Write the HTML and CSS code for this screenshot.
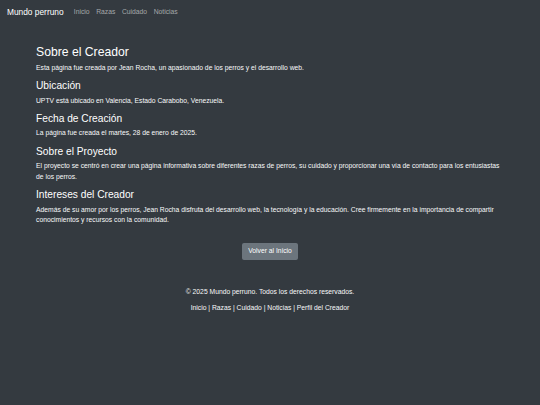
FILE: index.html
```html
<!DOCTYPE html>
<html lang="es">
<head>
<meta charset="utf-8">
<title>Sobre el Creador - Mundo perruno</title>
<link rel="stylesheet" href="styles.css">
</head>
<body>
<nav class="navbar">
  <a class="brand" href="#">Mundo perruno</a>
  <ul class="nav-links">
    <li><a href="#">Inicio</a></li>
    <li><a href="#">Razas</a></li>
    <li><a href="#">Cuidado</a></li>
    <li><a href="#">Noticias</a></li>
  </ul>
</nav>
<main class="container">
  <h2 class="title">Sobre el Creador</h2>
  <p>Esta página fue creada por Jean Rocha, un apasionado de los perros y el desarrollo web.</p>
  <h4>Ubicación</h4>
  <p>UPTV está ubicado en Valencia, Estado Carabobo, Venezuela.</p>
  <h4>Fecha de Creación</h4>
  <p>La página fue creada el martes, 28 de enero de 2025.</p>
  <h4>Sobre el Proyecto</h4>
  <p>El proyecto se centró en crear una página informativa sobre diferentes razas de perros, su cuidado y proporcionar una vía de contacto para los entusiastas de los perros.</p>
  <h4>Intereses del Creador</h4>
  <p>Además de su amor por los perros, Jean Rocha disfruta del desarrollo web, la tecnología y la educación. Cree firmemente en la importancia de compartir conocimientos y recursos con la comunidad.</p>
  <div class="actions">
    <a class="btn" href="#">Volver al Inicio</a>
  </div>
</main>
<footer class="footer">
  <p>© 2025 Mundo perruno. Todos los derechos reservados.</p>
  <p class="footer-links"><a href="#">Inicio</a> | <a href="#">Razas</a> | <a href="#">Cuidado</a> | <a href="#">Noticias</a> | <a href="#">Perfil del Creador</a></p>
</footer>
</body>
</html>
```
FILE: styles.css
```css
* { box-sizing: border-box; }
html, body { margin: 0; padding: 0; }
body {
  background: #343a40;
  color: #f8f9fa;
  font-family: "Liberation Sans", Arial, sans-serif;
  font-size: 6.75px;
  line-height: 10.35px;
  min-height: 405px;
}
a { color: inherit; text-decoration: none; }

.navbar {
  display: flex;
  align-items: center;
  height: 24px;
  padding: 0 7px;
}
.brand {
  font-size: 8.35px;
  color: #fff;
  margin-right: 6.9px;
}
.nav-links {
  display: flex;
  list-style: none;
  margin: 0;
  padding: 0;
}
.nav-links a {
  display: block;
  padding: 0 3.3px;
  color: rgba(255,255,255,.55);
  font-size: 6.75px;
}

.container {
  margin: 20.6px 36px 0;
}
h2, h4 {
  margin: 0 0 3.44px;
  font-weight: 500;
  line-height: 1.2;
  color: #fff;
}
.title { font-size: 12.2px; }
h4 { font-size: 10.2px; }
p { margin: 0 0 6.9px; }

.actions {
  margin-top: 17.3px;
  text-align: center;
}
.btn {
  display: inline-block;
  background: #6c757d;
  color: #fff;
  border: 1px solid #6c757d;
  border-radius: 1.6px;
  padding: 2.6px 5.4px;
  line-height: 10.35px;
  font-size: 6.75px;
}

.footer {
  margin-top: 27px;
  text-align: center;
}
.footer p { margin: 0 0 5.5px; }
```
